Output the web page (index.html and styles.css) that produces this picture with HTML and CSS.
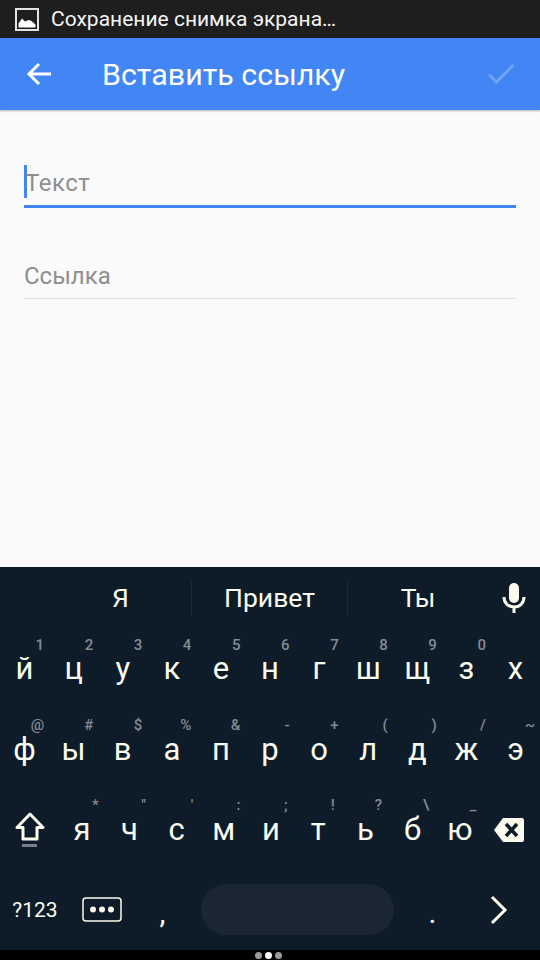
FILE: index.html
```html
<!doctype html>
<html lang="ru">
  <head>
    <meta charset="UTF-8" />
    <title>Вставить ссылку</title>
    <link rel="stylesheet" href="styles.css">
  </head>

  <body>
    <div class="phone">
      <div class="status-bar">
        <svg class="status-icon" width="24" height="23" viewBox="0 0 24 23">
          <rect x="1" y="1" width="22" height="21" fill="none" stroke="#e4e4e4" stroke-width="2"/>
          <path d="M3.500 19.500V15.500L7 10.500L10 13.500L13.500 12L16.500 13L20.500 16.500V19.500Z" fill="#fff"/>
        </svg>
        <span class="status-text">Сохранение снимка экрана…</span>
      </div>

      <header class="app-bar">
        <svg class="back-icon" width="26" height="24" viewBox="0 0 26 24">
          <path d="M25 12H3M13 2L3 12L13 22" fill="none" stroke="#fff" stroke-width="3"/>
        </svg>
        <h1 class="title">Вставить ссылку</h1>
        <svg class="check-icon" width="28" height="22" viewBox="0 0 28 22">
          <path d="M2 11.500L9.500 19L26.500 2" fill="none" stroke="#fff" stroke-opacity="0.25" stroke-width="3"/>
        </svg>
      </header>

      <main class="form">
        <div class="field field-active"><span class="caret"></span>Текст</div>
        <div class="field">Ссылка</div>
      </main>

      <section class="keyboard">
        <div class="suggestions">
          <div class="suggestion">Я</div>
          <div class="suggestion">Привет</div>
          <div class="suggestion">Ты</div>
          <svg class="mic-icon" width="24" height="30" viewBox="0 0 24 30">
            <rect x="7" y="0" width="10" height="20" rx="5" fill="#fbfbee"/>
            <path d="M2 14C2 20 6 24 12 24C18 24 22 20 22 14M12 24V30" fill="none" stroke="#fbfbee" stroke-width="3"/>
          </svg>
        </div>

        <div class="key-row">
          <div class="key">й<span class="hint">1</span></div>
          <div class="key">ц<span class="hint">2</span></div>
          <div class="key">у<span class="hint">3</span></div>
          <div class="key">к<span class="hint">4</span></div>
          <div class="key">е<span class="hint">5</span></div>
          <div class="key">н<span class="hint">6</span></div>
          <div class="key">г<span class="hint">7</span></div>
          <div class="key">ш<span class="hint">8</span></div>
          <div class="key">щ<span class="hint">9</span></div>
          <div class="key">з<span class="hint">0</span></div>
          <div class="key">х</div>
        </div>

        <div class="key-row">
          <div class="key">ф<span class="hint">@</span></div>
          <div class="key">ы<span class="hint">#</span></div>
          <div class="key">в<span class="hint">$</span></div>
          <div class="key">а<span class="hint">%</span></div>
          <div class="key">п<span class="hint">&amp;</span></div>
          <div class="key">р<span class="hint">-</span></div>
          <div class="key">о<span class="hint">+</span></div>
          <div class="key">л<span class="hint">(</span></div>
          <div class="key">д<span class="hint">)</span></div>
          <div class="key">ж<span class="hint">/</span></div>
          <div class="key">э<span class="hint">~</span></div>
        </div>

        <div class="key-row key-row-shift">
          <div class="key key-wide">
            <svg width="30" height="36" viewBox="0 0 30 36">
              <path d="M15 2L28 15.500H22V27H8V15.500H2Z" fill="none" stroke="#fbfbee" stroke-width="3" stroke-linejoin="round"/>
              <rect x="7" y="32" width="15" height="3" fill="#77808a"/>
            </svg>
          </div>
          <div class="key">я<span class="hint">*</span></div>
          <div class="key">ч<span class="hint">"</span></div>
          <div class="key">с<span class="hint">'</span></div>
          <div class="key">м<span class="hint">:</span></div>
          <div class="key">и<span class="hint">;</span></div>
          <div class="key">т<span class="hint">!</span></div>
          <div class="key">ь<span class="hint">?</span></div>
          <div class="key">б<span class="hint">\</span></div>
          <div class="key">ю<span class="hint">_</span></div>
          <div class="key key-wide key-delete">
            <svg width="30" height="24" viewBox="0 0 30 24">
              <path d="M9 0H28C29 0 30 1 30 2V22C30 23 29 24 28 24H9L0 12Z" fill="#fbfbee"/>
              <path d="M12 6L23 18M23 6L12 18" stroke="#0e1c2a" stroke-width="3.500"/>
            </svg>
          </div>
        </div>

        <div class="key-row key-row-bottom">
          <div class="key key-symbols">?123</div>
          <div class="key key-emoji">
            <svg width="40" height="25" viewBox="0 0 40 25">
              <rect x="1" y="1" width="38" height="23" rx="3" fill="none" stroke="#fbfbee" stroke-width="1.500"/>
              <circle cx="11" cy="12.500" r="3" fill="#fbfbee"/>
              <circle cx="20" cy="12.500" r="3" fill="#fbfbee"/>
              <circle cx="29" cy="12.500" r="3" fill="#fbfbee"/>
            </svg>
          </div>
          <div class="key key-punct">,</div>
          <div class="key key-space"><span class="space-bar"></span></div>
          <div class="key key-punct">.</div>
          <div class="key key-enter">
            <svg width="18" height="30" viewBox="0 0 18 30">
              <path d="M2 2L15 15L2 28" fill="none" stroke="#fbfbee" stroke-width="3"/>
            </svg>
          </div>
        </div>
      </section>

      <footer class="nav-bar">
        <span class="dot"></span>
        <span class="dot dot-on"></span>
        <span class="dot"></span>
      </footer>
    </div>
  </body>
</html>
```

FILE: styles.css
```css
html {
  background: black;
}

body {
  margin: 0;
  padding: 0;
  font-family: Roboto, "Noto Sans", sans-serif;
}

.phone {
  width: 540px;
  height: 960px;
  display: flex;
  flex-direction: column;
  overflow: hidden;
  background: #fafafa;
}

.status-bar {
  height: 38px;
  display: flex;
  align-items: center;
  padding-left: 15px;
  gap: 12px;
  background: #1e1e1e;
  color: #f4f4f4;
}

.status-icon {
  flex: none;
}

.status-text {
  font-size: 21px;
}

.app-bar {
  height: 72px;
  display: flex;
  align-items: center;
  background: #4285f4;
  box-shadow: 0 1px 2px rgba(0, 0, 0, 0.3);
  color: white;
  position: relative;
}

.back-icon {
  margin-left: 26px;
  flex: none;
}

.title {
  margin: 0 0 0 50px;
  flex: 1;
  font-size: 30.400px;
  font-weight: 400;
}

.check-icon {
  margin-right: 25px;
  flex: none;
}

.form {
  flex: 1;
  padding: 55px 24px 0;
  color: #8e8e8e;
}

.field {
  height: 40px;
  display: flex;
  align-items: flex-start;
  font-size: 24px;
  line-height: 36px;
  border-bottom: 1px solid #e0e0e0;
}

.field-active {
  border-bottom: 3px solid #4285f4;
  margin-bottom: 50px;
  letter-spacing: 0.500px;
}

.caret {
  width: 3px;
  height: 33px;
  margin-right: -2px;
  background: #4285f4;
}

.keyboard {
  height: 383px;
  background: #0e1c2a;
  color: #fbfbee;
  display: flex;
  flex-direction: column;
}

.suggestions {
  height: 62px;
  display: flex;
  align-items: center;
  padding-left: 50px;
  font-size: 26.500px;
}

.suggestion {
  width: 141px;
  height: 36px;
  line-height: 36px;
  text-align: center;
  border-left: 1px solid #1a2835;
  box-sizing: border-box;
}

.suggestion:first-child {
  border-left: none;
}

.suggestion:nth-child(2) {
  width: 156px;
}

.mic-icon {
  margin-left: 14px;
  margin-top: 1px;
}

.key-row {
  height: 80.500px;
  display: flex;
}

.key {
  flex: 1;
  position: relative;
  display: flex;
  align-items: center;
  justify-content: center;
  font-size: 31px;
}

.hint {
  position: absolute;
  top: 7px;
  right: 5px;
  font-size: 15px;
  font-weight: 500;
  color: #858b93;
}

.key-row-shift .hint {
  right: 7px;
}

.key-row-shift .key {
  left: 1px;
}

.key-wide {
  flex: none;
  width: 57.500px;
}

.key-row-shift .key-delete {
  left: -2px;
}

.key-row-bottom .key {
  flex: none;
}

.key-symbols {
  width: 70px;
  font-size: 21px;
}

.key-emoji {
  width: 64px;
}

.key-punct {
  width: 57px;
  font-size: 30px;
  align-items: flex-end;
  padding-bottom: 20px;
  box-sizing: border-box;
}

.key-space {
  width: 210px;
}

.space-bar {
  display: block;
  width: 193px;
  height: 51px;
  border-radius: 26px;
  background: #1a2631;
}

.key-enter {
  width: 82px;
}

.key-row-bottom .key-space {
  left: 1px;
}

.key-row-bottom .key-punct:nth-child(5) {
  left: 3px;
}

.nav-bar {
  height: 10px;
  display: flex;
  align-items: center;
  justify-content: center;
  gap: 3px;
  padding-right: 4px;
  background: black;
}

.dot {
  width: 7px;
  height: 7px;
  border-radius: 50%;
  background: #9a9a9a;
}

.dot-on {
  background: white;
}
```
